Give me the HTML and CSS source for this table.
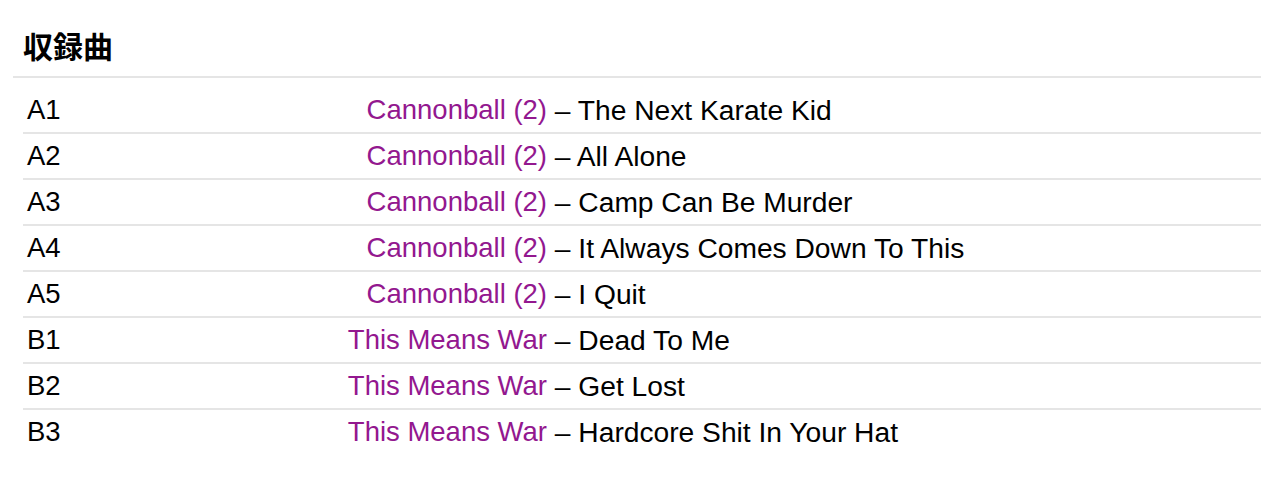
FILE: index.html
```html
<!DOCTYPE html>
<html lang="ja">
<head>
<meta charset="utf-8">
<link rel="stylesheet" href="styles.css">
</head>
<body>
<section class="tracklist">
  <h2 class="tracklist-title">収録曲</h2>
  <ul class="tracks">
    <li class="track"><span class="pos">A1</span><span class="artist">Cannonball (2)</span><span class="title"><span class="sep"> – </span>The Next Karate Kid</span></li>
    <li class="track"><span class="pos">A2</span><span class="artist">Cannonball (2)</span><span class="title"><span class="sep"> – </span>All Alone</span></li>
    <li class="track"><span class="pos">A3</span><span class="artist">Cannonball (2)</span><span class="title"><span class="sep"> – </span>Camp Can Be Murder</span></li>
    <li class="track"><span class="pos">A4</span><span class="artist">Cannonball (2)</span><span class="title"><span class="sep"> – </span>It Always Comes Down To This</span></li>
    <li class="track"><span class="pos">A5</span><span class="artist">Cannonball (2)</span><span class="title"><span class="sep"> – </span>I Quit</span></li>
    <li class="track"><span class="pos">B1</span><span class="artist">This Means War</span><span class="title"><span class="sep"> – </span>Dead To Me</span></li>
    <li class="track"><span class="pos">B2</span><span class="artist">This Means War</span><span class="title"><span class="sep"> – </span>Get Lost</span></li>
    <li class="track"><span class="pos">B3</span><span class="artist">This Means War</span><span class="title"><span class="sep"> – </span>Hardcore Shit In Your Hat</span></li>
  </ul>
</section>
</body>
</html>
```
FILE: styles.css
```css
html, body {
  margin: 0;
  padding: 0;
  background: #ffffff;
}
body {
  font-family: "Liberation Sans", Arial, "Noto Sans CJK JP", sans-serif;
  color: #000000;
}
.tracklist {
  margin-left: 13px;
}
.tracklist-title {
  margin: 0;
  padding: 26px 0 0 10px;
  height: 50px;
  font-family: "Noto Sans CJK JP", sans-serif;
  font-size: 30px;
  font-weight: 700;
  line-height: 38px;
  border-bottom: 2px solid #e5e5e5;
}
.tracks {
  list-style: none;
  margin: 0 0 0 10px;
  padding: 10px 0 0 0;
}
.track {
  display: flex;
  align-items: center;
  height: 44px;
  font-size: 27.5px;
  line-height: 32px;
  border-bottom: 2px solid #e5e5e5;
  white-space: nowrap;
}
.track:last-child {
  border-bottom: none;
}
.pos {
  width: 100px;
  padding-left: 4px;
}
.artist {
  width: 420px;
  text-align: right;
  color: #93188f;
}
.title {
  font-size: 28.2px;
}
.sep {
  white-space: pre;
}
```
